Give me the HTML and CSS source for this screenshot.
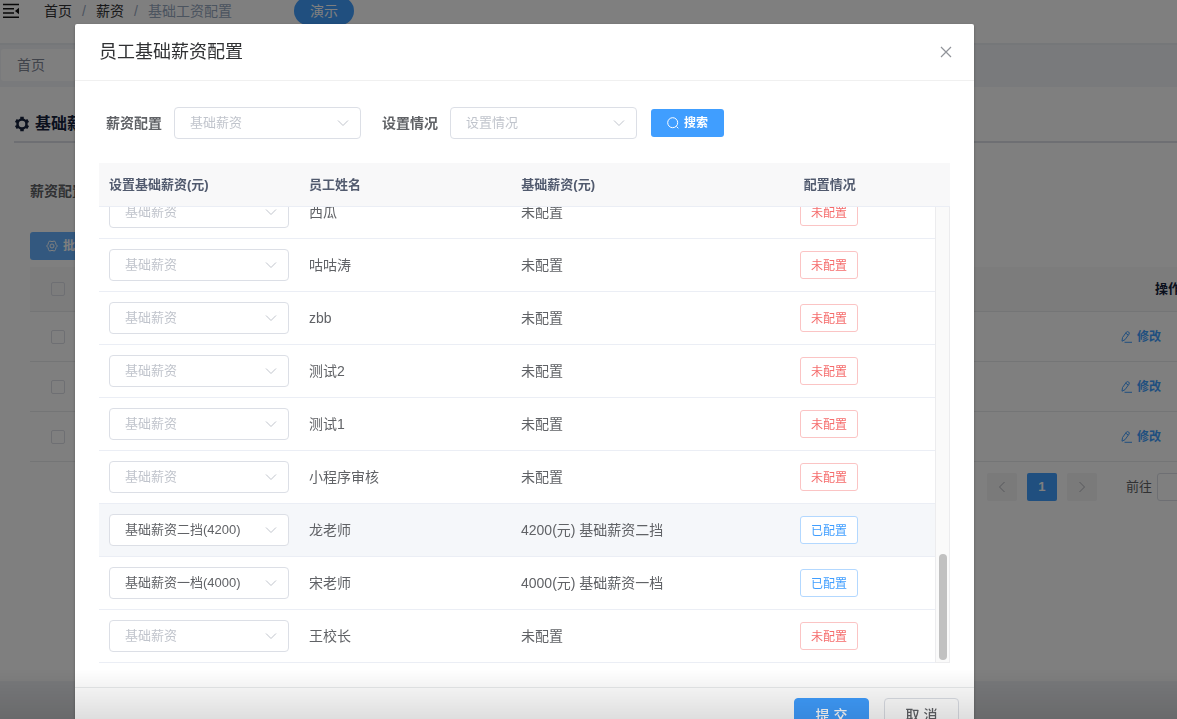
FILE: index.html
```html
<!DOCTYPE html>
<html lang="zh-CN">
<head>
<meta charset="utf-8">
<title>基础工资配置</title>
<link rel="stylesheet" href="styles.css">
</head>
<body>
<svg class="sprite" aria-hidden="true">
  <symbol id="chevron" viewBox="0 0 14 14"><path d="M2 4.500 L7 9.500 L12 4.500" fill="none" stroke="currentColor"/></symbol>
  <symbol id="edit" viewBox="0 0 14 14"><path d="M3.500 7.500 L7.500 2 Q8.500 1.200 9.700 2 Q10.800 3 10 4.200 L6 9.700 L3 11.200 Z M6.800 3.200 L9.200 5 M5.500 12.300 H13" fill="none" stroke="currentColor"/></symbol>
</svg>
<div class="page">
  <header class="topbar">
    <button class="menu-button" type="button" aria-label="折叠菜单">
      <svg width="18" height="16" viewBox="0 0 18 16"><path d="M0 1.500 H16 M0 5.800 H11 M0 10 H11 M0 14.200 H16" fill="none" stroke="currentColor" stroke-width="1.600"/><path d="M16 4.800 V11.200 L12 8 Z" fill="currentColor"/></svg>
    </button>
    <nav class="crumbs"><a href="#">首页</a><span class="slash">/</span><a href="#">薪资</a><span class="slash">/</span><span class="current">基础工资配置</span></nav>
    <button class="demo" type="button">演示</button>
  </header>
  <div class="tabs"><a class="tab" href="#">首页</a></div>
  <main class="sheet">
    <h1 class="page-title">
      <svg width="16" height="16" viewBox="0 0 16 16"><circle cx="8" cy="8" r="4.500" fill="none" stroke="currentColor" stroke-width="2.500"/><path d="M8 0.800 V3 M8 13 V15.200 M1.800 4.400 L3.700 5.500 M12.300 10.500 L14.200 11.600 M1.800 11.600 L3.700 10.500 M12.300 5.500 L14.200 4.400" stroke="currentColor" stroke-width="3.500"/></svg>
      基础薪资配置
    </h1>
    <section class="content">
      <p class="query">薪资配置</p>
      <button class="batch" type="button">
        <svg width="12" height="12" viewBox="0 0 12 12" fill="none" stroke="currentColor"><path d="M3.500 1 Q6 2.200 8.500 1 L9.500 2.500 Q9.500 4.500 11.400 6 Q9.500 7.500 9.500 9.500 L8.500 11 Q6 9.800 3.500 11 L2.500 9.500 Q2.500 7.500 0.600 6 Q2.500 4.500 2.500 2.500 Z"/><circle cx="6" cy="6" r="2"/></svg>
        批量设置
      </button>
      <table class="list">
        <thead><tr><th class="pick"><input type="checkbox" aria-label="全选"></th><th></th><th class="ops">操作</th></tr></thead>
        <tbody>
          <tr><td class="pick"><input type="checkbox" aria-label="选择第1行"></td><td></td><td class="ops"><a href="#"><svg width="14" height="14"><use href="#edit"/></svg>修改</a></td></tr>
          <tr><td class="pick"><input type="checkbox" aria-label="选择第2行"></td><td></td><td class="ops"><a href="#"><svg width="14" height="14"><use href="#edit"/></svg>修改</a></td></tr>
          <tr><td class="pick"><input type="checkbox" aria-label="选择第3行"></td><td></td><td class="ops"><a href="#"><svg width="14" height="14"><use href="#edit"/></svg>修改</a></td></tr>
        </tbody>
      </table>
      <div class="pager">
        <button type="button" aria-label="上一页"><svg class="prev" width="14" height="14"><use href="#chevron"/></svg></button>
        <button class="active" type="button">1</button>
        <button type="button" aria-label="下一页"><svg class="next" width="14" height="14"><use href="#chevron"/></svg></button>
        <label class="jump">前往<input type="text" value="1"></label>
      </div>
    </section>
  </main>
</div>

<div class="overlay">
  <div class="dialog" role="dialog" aria-modal="true" aria-labelledby="dialog-title">
    <div class="dialog-head">
      <h2 id="dialog-title">员工基础薪资配置</h2>
      <button class="close" type="button" aria-label="关闭"><svg width="12" height="12" viewBox="0 0 12 12"><path d="M1 1 L11 11 M11 1 L1 11" stroke="currentColor" stroke-width="1.200"/></svg></button>
    </div>
    <div class="dialog-body">
      <form class="filters">
        <label for="salary">薪资配置</label>
        <span class="select wide"><select id="salary"><option>基础薪资</option></select><svg width="14" height="14"><use href="#chevron"/></svg></span>
        <label for="state">设置情况</label>
        <span class="select wide"><select id="state"><option>设置情况</option></select><svg width="14" height="14"><use href="#chevron"/></svg></span>
        <button class="search" type="button"><svg width="12" height="12" viewBox="0 0 12 12"><path d="M9.500 9.500 L11.300 11.300 M10.700 5.700 A5 5 0 1 0 5.700 10.700 A5 5 0 0 0 10.700 5.700" fill="none" stroke="currentColor"/></svg>搜索</button>
      </form>
      <div class="grid">
        <div class="grid-head">
          <table class="staff">
            <thead><tr><th class="set">设置基础薪资(元)</th><th>员工姓名</th><th>基础薪资(元)</th><th class="status">配置情况</th></tr></thead>
          </table>
        </div>
        <div class="grid-body">
          <div class="viewport">
            <table class="staff">
              <tbody>
                <tr><td class="set"><span class="select"><select aria-label="西瓜 基础薪资"><option>基础薪资</option></select><svg width="14" height="14"><use href="#chevron"/></svg></span></td><td>西瓜</td><td>未配置</td><td class="status"><span class="tag">未配置</span></td></tr>
                <tr><td class="set"><span class="select"><select aria-label="咕咕涛 基础薪资"><option>基础薪资</option></select><svg width="14" height="14"><use href="#chevron"/></svg></span></td><td>咕咕涛</td><td>未配置</td><td class="status"><span class="tag">未配置</span></td></tr>
                <tr><td class="set"><span class="select"><select aria-label="zbb 基础薪资"><option>基础薪资</option></select><svg width="14" height="14"><use href="#chevron"/></svg></span></td><td>zbb</td><td>未配置</td><td class="status"><span class="tag">未配置</span></td></tr>
                <tr><td class="set"><span class="select"><select aria-label="测试2 基础薪资"><option>基础薪资</option></select><svg width="14" height="14"><use href="#chevron"/></svg></span></td><td>测试2</td><td>未配置</td><td class="status"><span class="tag">未配置</span></td></tr>
                <tr><td class="set"><span class="select"><select aria-label="测试1 基础薪资"><option>基础薪资</option></select><svg width="14" height="14"><use href="#chevron"/></svg></span></td><td>测试1</td><td>未配置</td><td class="status"><span class="tag">未配置</span></td></tr>
                <tr><td class="set"><span class="select"><select aria-label="小程序审核 基础薪资"><option>基础薪资</option></select><svg width="14" height="14"><use href="#chevron"/></svg></span></td><td>小程序审核</td><td>未配置</td><td class="status"><span class="tag">未配置</span></td></tr>
                <tr class="hovered"><td class="set"><span class="select filled"><select aria-label="龙老师 基础薪资"><option>基础薪资二挡(4200)</option></select><svg width="14" height="14"><use href="#chevron"/></svg></span></td><td>龙老师</td><td>4200(元) 基础薪资二挡</td><td class="status"><span class="tag done">已配置</span></td></tr>
                <tr><td class="set"><span class="select filled"><select aria-label="宋老师 基础薪资"><option>基础薪资一档(4000)</option></select><svg width="14" height="14"><use href="#chevron"/></svg></span></td><td>宋老师</td><td>4000(元) 基础薪资一档</td><td class="status"><span class="tag done">已配置</span></td></tr>
                <tr><td class="set"><span class="select"><select aria-label="王校长 基础薪资"><option>基础薪资</option></select><svg width="14" height="14"><use href="#chevron"/></svg></span></td><td>王校长</td><td>未配置</td><td class="status"><span class="tag">未配置</span></td></tr>
              </tbody>
            </table>
          </div>
          <div class="scrollbar"><div class="thumb"></div></div>
        </div>
      </div>
    </div>
    <div class="dialog-foot">
      <button class="submit" type="button">提 交</button>
      <button class="cancel" type="button">取 消</button>
    </div>
  </div>
</div>
<div class="fade"></div>
</body>
</html>
```
FILE: styles.css
```css
* { box-sizing: border-box; }
body {
  margin: 0;
  height: 100vh;
  overflow: hidden;
  background: #f3f5f8;
  color: #606266;
  font: 14px/20px "Liberation Sans", "Noto Sans CJK SC", sans-serif;
}
button, input, select { font: inherit; color: inherit; margin: 0; }
button { cursor: pointer; padding: 0; border: 0; background: none; }
a { color: inherit; text-decoration: none; }
h1, h2, p { margin: 0; }
svg { display: block; flex: none; }
table { border-collapse: separate; border-spacing: 0; table-layout: fixed; }
.sprite { position: absolute; width: 0; height: 0; }

.page { width: calc(100% + 60px); }
.topbar {
  display: flex;
  align-items: flex-start;
  height: 43px;
  background: #fff;
}
.menu-button { margin: 3px 23px 0 3px; color: #111; }
.crumbs { display: flex; margin-top: 1px; color: #303133; }
.slash { width: 24px; text-align: center; color: #97a8be; }
.current { color: #97a8be; }
.demo {
  width: 60px;
  height: 28px;
  margin: -3px 0 0 62px;
  border-radius: 14px;
  background: #409eff;
  color: #fff;
}
.tabs {
  height: 44px;
  padding: 4px 1px;
  border-top: 2px solid #ebeef3;
}
.tab {
  display: block;
  width: 90px;
  padding: 6px 16px;
  border-radius: 3px;
  background: #fff;
  color: #808695;
}
.sheet { height: 594px; padding: 20px 14px; background: #fff; }
.page-title {
  display: flex;
  align-items: center;
  gap: 5px;
  height: 36px;
  border-bottom: 2px solid #dcdfe6;
  color: #17233d;
  font-size: 16px;
  font-weight: 700;
}
.content { padding: 38px 16px; }
.query { font-weight: 700; }
.batch {
  display: flex;
  align-items: center;
  gap: 5px;
  height: 28px;
  margin: 31px 0 7px;
  padding: 0 16px;
  border-radius: 3px;
  background: #66b1ff;
  color: #fff;
  font-size: 12px;
  font-weight: 700;
}
.list { width: 100%; }
.list th, .list td { height: 50px; padding: 0; border-bottom: 1px solid #e8eaec; }
.list th { height: 45px; background: #f8f8f9; color: #17233d; font-size: 13px; font-weight: 700; }
.list .pick { width: 55px; text-align: center; }
.list .ops { width: 109px; padding-left: 21px; text-align: left; }
.list th.ops { padding-left: 57px; }
.ops a { display: flex; align-items: center; gap: 4px; color: #409eff; font-size: 12px; font-weight: 700; }
.list input {
  display: block;
  appearance: none;
  width: 14px;
  height: 14px;
  margin: 0 auto;
  border: 1px solid #dcdfe6;
  border-radius: 2px;
}
.pager { display: flex; justify-content: flex-end; gap: 10px; padding-top: 11px; font-size: 13px; }
.pager button {
  display: grid;
  place-items: center;
  width: 30px;
  height: 28px;
  border-radius: 2px;
  background: #f4f4f5;
  color: #b0b3ba;
}
.pager .active { background: #409eff; color: #fff; font-weight: 700; }
.prev { transform: rotate(90deg); }
.next { transform: rotate(-90deg); }
.jump { display: flex; align-items: center; gap: 5px; margin-left: 19px; }
.jump input { width: 50px; height: 28px; border: 1px solid #dcdfe6; border-radius: 3px; text-align: center; }

.overlay {
  position: fixed;
  inset: 0;
  display: flex;
  align-items: flex-start;
  padding: 24px 203px 0 75px;
  background: rgba(0, 0, 0, 0.5);
}
.dialog { flex: 1; min-width: 0; border-radius: 2px; background: #fff; box-shadow: 0 1px 3px rgba(0, 0, 0, 0.3); }
.dialog-head {
  display: flex;
  align-items: center;
  justify-content: space-between;
  height: 57px;
  padding: 0 22px 0 24px;
  border-bottom: 1px solid #f0f0f0;
}
.dialog-head h2 { color: #303133; font-size: 18px; font-weight: 400; line-height: 24px; }
.close { color: #909399; }
.dialog-body { padding: 26px 24px 24px; }
.filters { display: flex; align-items: center; padding-left: 7px; }
.filters label { margin-right: 12px; font-weight: 700; }
.wide + label { margin-left: 21px; }
.select { display: grid; align-items: center; width: 180px; font-size: 13px; }
.select.wide { width: 187px; }
.select > * { grid-area: 1 / 1; }
.select select {
  appearance: none;
  width: 100%;
  height: 32px;
  padding: 0 30px 0 15px;
  border: 1px solid #dcdfe6;
  border-radius: 4px;
  background: #fff;
  color: #c0c4cc;
}
.select.filled select { color: #606266; }
.select svg { justify-self: end; margin-right: 11px; color: #c0c4cc; pointer-events: none; }
.search {
  display: flex;
  align-items: center;
  justify-content: center;
  gap: 5px;
  width: 73px;
  height: 28px;
  margin-left: 14px;
  border-radius: 3px;
  background: #409eff;
  color: #fff;
  font-size: 12px;
  font-weight: 700;
  line-height: 22px;
}
.grid { margin-top: 24px; }
.grid-head { padding-right: 14px; background: #f8f8f9; border-bottom: 1px solid #ebeef5; }
.staff { width: 100%; }
.staff th { height: 43px; padding: 0 10px; color: #515a6e; font-size: 13px; font-weight: 700; text-align: left; }
.staff td { height: 53px; padding: 0 10px; border-bottom: 1px solid #ebeef5; }
.staff .set { width: 200px; }
.staff .status { text-align: center; }
.hovered td { background: #f5f7fa; }
.grid-body { display: flex; height: 456px; }
.viewport { display: flex; flex: 1; flex-direction: column; justify-content: flex-end; overflow: hidden; }
.viewport .staff { flex: none; }
.scrollbar {
  display: flex;
  flex-direction: column;
  justify-content: flex-end;
  align-items: center;
  width: 15px;
  padding-bottom: 2px;
  border: 1px solid #ececee;
  border-top: 0;
  background: #fafafa;
}
.thumb { width: 8px; height: 106px; border-radius: 4px; background: #c1c1c1; }
.tag {
  display: inline-block;
  height: 28px;
  padding: 0 10px;
  border: 1px solid #fbc4c4;
  border-radius: 3px;
  background: #fff;
  color: #f56c6c;
  font-size: 12px;
  line-height: 28px;
  vertical-align: middle;
}
.tag.done { border-color: #b3d8ff; color: #409eff; }
.dialog-foot { display: flex; justify-content: flex-end; gap: 15px; padding: 10px 15px; border-top: 1px solid #e8eaec; }
.dialog-foot button { width: 75px; height: 34px; border: 1px solid #dcdfe6; border-radius: 4px; font-weight: 500; }
.dialog-foot .submit { border-color: #409eff; background: #409eff; color: #fff; }

.fade {
  position: fixed;
  inset: auto 0 0;
  height: 50px;
  background: linear-gradient(rgba(0, 0, 0, 0), rgba(0, 0, 0, 0.13));
  pointer-events: none;
}
```
